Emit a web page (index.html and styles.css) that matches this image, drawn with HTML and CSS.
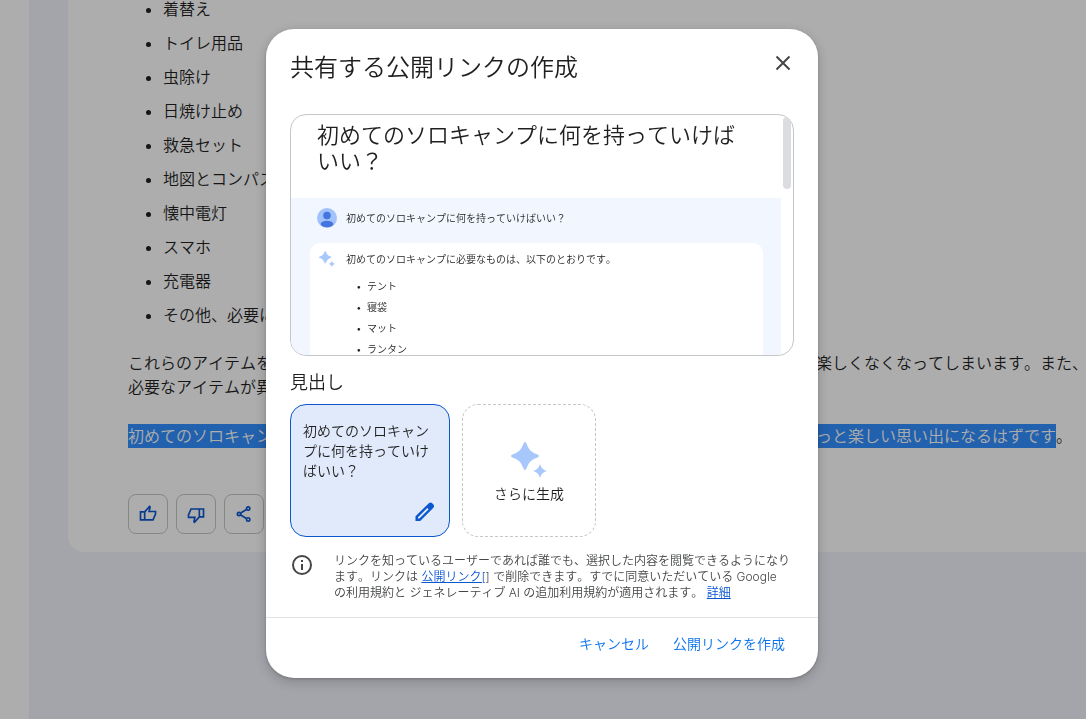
FILE: index.html
```
<!DOCTYPE html>
<html lang="ja">
<head>
    <meta charset="UTF-8">
    <meta name="viewport" content="width=device-width, initial-scale=1.0">
    <title>共有する公開リンクの作成</title>
    <link rel="stylesheet" href="styles.css">
</head>
<body>

    <div class="page">
        <nav class="side-rail"></nav>
        <main class="chat">
            <article class="response">
                <ul class="item-list">
                    <li>着替え</li>
                    <li>トイレ用品</li>
                    <li>虫除け</li>
                    <li>日焼け止め</li>
                    <li>救急セット</li>
                    <li>地図とコンパス</li>
                    <li>懐中電灯</li>
                    <li>スマホ</li>
                    <li>充電器</li>
                    <li>その他、必要に応じて</li>
                </ul>
                <p>これらのアイテムを忘れてしまうと、せっかくのキャンプが不便になったり、危険を伴ったり、楽しくなくなってしまいます。また、<br>必要なアイテムが異なるため、事前に確認しておきましょう。</p>
                <p><span class="selected">初めてのソロキャンプは不安もあるかもしれませんが、しっかりと準備をして臨んでいけば、きっと楽しい思い出になるはずです</span>。</p>
                <div class="actions">
                    <button type="button" aria-label="良い回答">
                        <svg viewBox="0 0 24 24" width="20" height="20"><path d="M8 19V9.500L13.800 3l.7.700L13.300 9h7.700v3L18 19zM3 9.500h5V19H3z"/></svg>
                    </button>
                    <button type="button" aria-label="悪い回答">
                        <svg viewBox="0 0 24 24" width="20" height="20"><path d="M16 6v9.500L10.200 22l-.7-.7L10.700 16H3v-3L6 6zM21 15.500h-5V6h5z"/></svg>
                    </button>
                    <button type="button" aria-label="共有">
                        <svg viewBox="0 0 24 24" width="20" height="20"><circle cx="17" cy="5.500" r="2"/><circle cx="6" cy="12" r="2"/><circle cx="17" cy="18.500" r="2"/><path d="M8 10.800l7-4.100M8 13.200l7 4.100"/></svg>
                    </button>
                </div>
            </article>
        </main>
    </div>

    <div class="scrim">
        <section class="dialog" role="dialog" aria-modal="true" aria-labelledby="dialog-title">
            <div class="dialog-body">
                <header class="dialog-header">
                    <h1 id="dialog-title">共有する公開リンクの作成</h1>
                    <button type="button" class="close" aria-label="閉じる">
                        <svg viewBox="0 0 24 24" width="24" height="24"><path d="M5.500 5.500l13 13M18.500 5.500l-13 13"/></svg>
                    </button>
                </header>

                <!-- Preview of the shared page -->
                <div class="preview">
                    <div class="preview-page">
                        <h2>初めてのソロキャンプに何を持っていけばいい？</h2>
                        <div class="preview-chat">
                            <div class="preview-row prompt">
                                <svg viewBox="0 0 20 20" width="20" height="20">
                                    <circle cx="10" cy="10" r="10" fill="#a1c2fa"/>
                                    <circle cx="10" cy="7.500" r="3.800" fill="#4374e0"/>
                                    <ellipse cx="10" cy="16" rx="6.300" ry="3.300" fill="#4374e0"/>
                                </svg>
                                <span>初めてのソロキャンプに何を持っていけばいい？</span>
                            </div>
                            <div class="preview-answer">
                                <div class="preview-row">
                                    <svg viewBox="0 0 36 36" width="16" height="16" fill="#a8c7fa"><path d="M14 0Q15 0 15.700 2C18 8 20 10 26 12.300Q28 13 28 14Q28 15 26 15.700C20 18 18 20 15.700 26Q15 28 14 28Q13 28 12.300 26C10 20 8 18 2 15.700Q0 15 0 14Q0 13 2 12.300C8 10 10 8 12.300 2Q13 0 14 0Z"/><path d="M29 22C30.500 26.300 31.700 27.500 36 29C31.700 30.500 30.500 31.700 29 36C27.500 31.700 26.300 30.500 22 29C26.300 27.500 27.500 26.300 29 22Z"/></svg>
                                    <span>初めてのソロキャンプに必要なものは、以下のとおりです。</span>
                                </div>
                                <ul>
                                    <li>テント</li>
                                    <li>寝袋</li>
                                    <li>マット</li>
                                    <li>ランタン</li>
                                </ul>
                            </div>
                        </div>
                    </div>
                    <div class="scroll-thumb"></div>
                </div>

                <h3>見出し</h3>
                <div class="headlines">
                    <button type="button" class="headline">
                        <span>初めてのソロキャンプに何を持っていけばいい？</span>
                        <svg viewBox="0 0 24 24" width="24" height="24"><path fill-rule="evenodd" d="M2.500 21v-4.700L15.800 3.200q1.700-1.400 3.400 0l1.200 1.200q1.400 1.700 0 3.400L7.200 21zM5 18.600h1.400L15.700 9.300l-1.400-1.400L5 17.200z"/></svg>
                    </button>
                    <button type="button" class="generate">
                        <svg viewBox="0 0 36 36" width="36" height="36"><path d="M14 0Q15 0 15.700 2C18 8 20 10 26 12.300Q28 13 28 14Q28 15 26 15.700C20 18 18 20 15.700 26Q15 28 14 28Q13 28 12.300 26C10 20 8 18 2 15.700Q0 15 0 14Q0 13 2 12.300C8 10 10 8 12.300 2Q13 0 14 0Z"/><path d="M29 22C30.500 26.300 31.700 27.500 36 29C31.700 30.500 30.500 31.700 29 36C27.500 31.700 26.300 30.500 22 29C26.300 27.500 27.500 26.300 29 22Z"/></svg>
                        <span>さらに生成</span>
                    </button>
                </div>

                <div class="notice">
                    <svg viewBox="0 0 24 24" width="24" height="24"><circle cx="12" cy="12" r="9" fill="none" stroke="#444746" stroke-width="2"/><path fill="#444746" d="M11 11h2v6h-2zM11 7h2v2h-2z"/></svg>
                    <p>リンクを知っているユーザーであれば誰でも、選択した内容を閲覧できるようになります。リンクは <a href="#">公開リンク[</a>] で削除できます。すでに同意いただいている Google の利用規約と ジェネレーティブ AI の追加利用規約が適用されます。 <a href="#">詳細</a></p>
                </div>
            </div>

            <footer class="dialog-footer">
                <button type="button">キャンセル</button>
                <button type="button">公開リンクを作成</button>
            </footer>
        </section>
    </div>

</body>
</html>
```
FILE: styles.css
```
* {
    box-sizing: border-box;
}
body {
    margin: 0;
    height: 100vh;
    overflow: hidden;
    font-family: Inter, "Noto Sans CJK JP", sans-serif;
    font-weight: 350;
    font-kerning: none;
    color: #1f1f1f;
}
h1, h2, h3, p, ul {
    margin: 0;
    font-weight: inherit;
}
button {
    padding: 0;
    border: 0;
    background: none;
    font: inherit;
    color: inherit;
    cursor: pointer;
}
svg {
    display: block;
    flex: none;
}

/* Page behind the dialog */
.page {
    display: flex;
    height: 100%;
    overflow: hidden;
}
.side-rail {
    flex: 0 0 29px;
    background: #fff;
}
.chat {
    flex: 1;
    min-width: 0;
    padding-left: 39px;
    background: #f1f4fc;
}
.response {
    margin-top: -8px;
    padding: 0 0 18px 60px;
    border-bottom-left-radius: 16px;
    background: #fff;
    font-size: 16px;
    line-height: 24px;
    white-space: nowrap;
    overflow: hidden;
}
.item-list {
    margin-bottom: 19px;
    padding-left: 35px;
    line-height: 34px;
}
.response p {
    margin-bottom: 25px;
}
.selected {
    display: inline-block;
    background: #3390ff;
    color: #fff;
}
.actions {
    display: flex;
    gap: 8px;
    padding-top: 21px;
}
.actions button {
    display: grid;
    place-items: center;
    width: 40px;
    height: 40px;
    border: 1px solid #c4c7c5;
    border-radius: 8px;
}
.actions svg {
    fill: none;
    stroke: #0b57d0;
    stroke-width: 2;
}

/* Dialog */
.scrim {
    position: fixed;
    inset: 0;
    display: grid;
    place-items: center;
    padding: 0 2px 12px 0;
    background: rgba(0, 0, 0, 0.32);
}
.dialog {
    width: 100%;
    max-width: 552px;
    border-radius: 28px;
    background: #fff;
    box-shadow: 0 4px 12px 2px rgba(0, 0, 0, 0.15), 0 1px 3px rgba(0, 0, 0, 0.2);
}
.dialog-body {
    padding: 22px 24px 16px;
}
.dialog-header {
    display: flex;
    justify-content: space-between;
    align-items: flex-start;
    height: 63px;
}
.dialog-header h1 {
    font-size: 24px;
    line-height: 34px;
}
.close svg {
    margin-right: -1px;
    stroke: #444746;
    stroke-width: 2;
}

/* Preview */
.preview {
    position: relative;
    height: 242px;
    padding-right: 12px;
    border: 1px solid #c4c7c5;
    border-radius: 16px;
    overflow: hidden;
}
.preview h2 {
    padding: 7px 26px 24px;
    font-size: 22px;
    line-height: 26px;
}
.preview-chat {
    padding: 10px 18px 0 19px;
    background: #f2f6fe;
    font-size: 10px;
    line-height: 20px;
}
.preview-row {
    display: flex;
    align-items: center;
    gap: 9px;
}
.prompt {
    padding: 0 0 15px 7px;
}
.preview-answer {
    height: 140px;
    padding: 6px 9px;
    border-radius: 10px;
    background: #fff;
}
.preview-answer .preview-row {
    gap: 11px;
}
.preview-answer ul {
    padding: 7px 0 0 48px;
    line-height: 21px;
}
.preview-answer li::marker {
    content: "•\00a0\00a0";
}
.scroll-thumb {
    position: absolute;
    top: 2px;
    right: 2px;
    width: 8px;
    height: 72px;
    border-radius: 4px;
    background: #dadce0;
}

/* Headline choices */
.dialog h3 {
    margin: 15px 0 9px;
    font-size: 18px;
    line-height: 24px;
}
.headlines {
    display: flex;
    gap: 12px;
    height: 133px;
}
.headline {
    display: flex;
    flex-direction: column;
    justify-content: space-between;
    width: 160px;
    padding: 16px 12px 12px;
    border: 1px solid #0b57d0;
    border-radius: 16px;
    background: #e1eafa;
    font-size: 14px;
    line-height: 20px;
    text-align: left;
}
.headline svg {
    align-self: flex-end;
    fill: #0b57d0;
}
.generate {
    display: flex;
    flex-direction: column;
    align-items: center;
    justify-content: center;
    gap: 6px;
    width: 134px;
    padding-top: 4px;
    border: 1px dashed #c4c7c5;
    border-radius: 16px;
    font-size: 14px;
    line-height: 20px;
}
.generate svg {
    fill: #a8c7fa;
}

.notice {
    display: flex;
    gap: 20px;
    margin-top: 16px;
    padding-right: 2px;
    font-size: 12px;
    line-height: 16px;
    color: #444746;
}
.notice a {
    color: #0b57d0;
}

.dialog-footer {
    display: flex;
    justify-content: flex-end;
    gap: 8px;
    padding: 7px 25px 17px;
    border-top: 1px solid #e3e3e3;
}
.dialog-footer button {
    height: 36px;
    padding: 0 8px;
    font-size: 14px;
    color: #0b73ee;
}
```
